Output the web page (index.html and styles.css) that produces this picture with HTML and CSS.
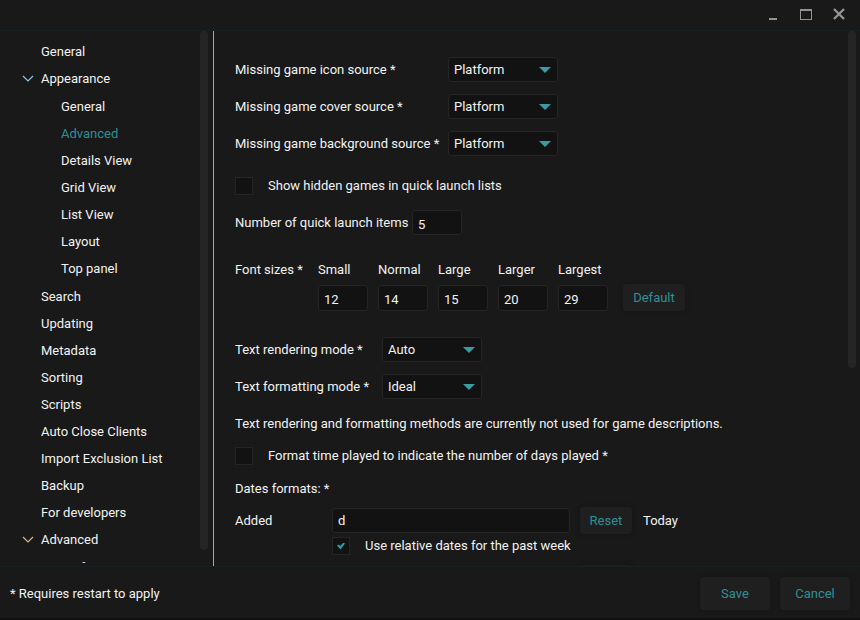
FILE: index.html
```html
<!DOCTYPE html>
<html lang="en">
<head>
<meta charset="utf-8">
<title>Settings</title>
<link rel="stylesheet" href="styles.css">
</head>
<body>
<div class="window">
  <header class="titlebar">
    <button class="caption-button" type="button" aria-label="Minimize"><svg width="14" height="14" viewBox="0 0 14 14"><path d="M3 11h8v2H3z" fill="currentColor"/></svg></button>
    <button class="caption-button" type="button" aria-label="Maximize"><svg width="14" height="14" viewBox="0 0 14 14"><path d="M1 2h12v11H1zM2 4v8h10V4z" fill="currentColor" fill-rule="evenodd"/></svg></button>
    <button class="caption-button" type="button" aria-label="Close"><svg width="14" height="14" viewBox="0 0 14 14"><path d="M2 2l10 10M12 2L2 12" stroke="currentColor" stroke-width="2.4" fill="none"/></svg></button>
  </header>

  <div class="body">
    <nav class="sidebar" aria-label="Sections">
      <ul class="tree">
        <li><a href="#">General</a></li>
        <li><a class="branch" href="#"><svg class="chevron chevron-blue" width="12" height="8" viewBox="0 0 12 8"><path d="M1 1l5 5 5-5"/></svg>Appearance</a>
          <ul class="subtree">
            <li><a href="#">General</a></li>
            <li><a class="active" href="#">Advanced</a></li>
            <li><a href="#">Details View</a></li>
            <li><a href="#">Grid View</a></li>
            <li><a href="#">List View</a></li>
            <li><a href="#">Layout</a></li>
            <li><a href="#">Top panel</a></li>
          </ul>
        </li>
        <li><a href="#">Search</a></li>
        <li><a href="#">Updating</a></li>
        <li><a href="#">Metadata</a></li>
        <li><a href="#">Sorting</a></li>
        <li><a href="#">Scripts</a></li>
        <li><a href="#">Auto Close Clients</a></li>
        <li><a href="#">Import Exclusion List</a></li>
        <li><a href="#">Backup</a></li>
        <li><a href="#">For developers</a></li>
        <li><a class="branch" href="#"><svg class="chevron chevron-gold" width="12" height="8" viewBox="0 0 12 8"><path d="M1 1l5 5 5-5"/></svg>Advanced</a>
          <ul class="subtree">
            <li><a href="#">Performance</a></li>
          </ul>
        </li>
      </ul>
      <div class="scroll"><div class="thumb thumb-nav"></div></div>
    </nav>

    <main class="content">
      <form class="settings">
        <div class="sources">
          <label for="icon-source">Missing game icon source *</label>
          <span class="drop"><select id="icon-source"><option>Platform</option></select></span>
          <label for="cover-source">Missing game cover source *</label>
          <span class="drop"><select id="cover-source"><option>Platform</option></select></span>
          <label for="background-source">Missing game background source *</label>
          <span class="drop"><select id="background-source"><option>Platform</option></select></span>
        </div>

        <label class="check hidden-games"><input type="checkbox">Show hidden games in quick launch lists</label>

        <div class="quick">
          <label for="quick-items">Number of quick launch items</label>
          <input class="field number" id="quick-items" type="text" value="5">
        </div>

        <div class="fonts">
          <span class="fonts-title">Font sizes *</span>
          <label class="size">Small<input class="field number" type="text" value="12"></label>
          <label class="size">Normal<input class="field number" type="text" value="14"></label>
          <label class="size">Large<input class="field number" type="text" value="15"></label>
          <label class="size">Larger<input class="field number" type="text" value="20"></label>
          <label class="size">Largest<input class="field number" type="text" value="29"></label>
          <button class="button small default" type="button">Default</button>
        </div>

        <div class="modes">
          <label for="rendering">Text rendering mode *</label>
          <span class="drop"><select id="rendering"><option>Auto</option></select></span>
          <label for="formatting">Text formatting mode *</label>
          <span class="drop"><select id="formatting"><option>Ideal</option></select></span>
        </div>

        <p class="note">Text rendering and formatting methods are currently not used for game descriptions.</p>

        <label class="check days"><input type="checkbox">Format time played to indicate the number of days played *</label>

        <p class="dates-title">Dates formats: *</p>

        <div class="date">
          <label for="added">Added</label>
          <input class="field" id="added" type="text" value="d">
          <button class="button small" type="button">Reset</button>
          <span>Today</span>
          <label class="check relative"><input type="checkbox" checked>Use relative dates for the past week</label>
        </div>
        <div class="date">
          <label for="modified">Modified</label>
          <input class="field" id="modified" type="text" value="d">
          <button class="button small" type="button">Reset</button>
          <span>Today</span>
        </div>
      </form>
      <div class="scroll"><div class="thumb thumb-content"></div></div>
    </main>
  </div>

  <footer class="footer">
    <span class="restart">* Requires restart to apply</span>
    <button class="button large" type="button">Save</button>
    <button class="button large" type="button">Cancel</button>
  </footer>
</div>
</body>
</html>
```
FILE: styles.css
```css
* {
  box-sizing: border-box;
}

body {
  margin: 0;
  background: #191919;
  color: #f2f2f2;
  font: 13px/20px Roboto, "Noto Sans", sans-serif;
}

button,
input,
select {
  font: inherit;
  color: inherit;
}

p {
  margin: 0;
}

.window {
  display: flex;
  flex-direction: column;
  height: 100vh;
  border-bottom: 2px solid #101010;
}

.titlebar {
  display: flex;
  flex: none;
  justify-content: flex-end;
  height: 31px;
  padding: 0 5px 2px 0;
  border-bottom: 1px solid #172022;
}

.caption-button {
  display: flex;
  align-items: center;
  justify-content: center;
  width: 33px;
  padding: 0;
  border: 0;
  background: none;
  color: #929292;
}

.body {
  display: flex;
  flex: 1;
  min-height: 0;
}

.sidebar {
  display: flex;
  flex: none;
  width: 214px;
  padding-right: 5px;
  border-right: 1px solid #5fc4cb;
}

.tree {
  flex: 1;
  margin: 0 0 3px;
  padding: 7px 0 0;
  list-style: none;
  overflow: hidden;
}

.tree a {
  display: flex;
  align-items: center;
  height: 27px;
  padding-left: 41px;
  color: inherit;
  text-decoration: none;
}

.tree .branch {
  gap: 7px;
  padding-left: 22px;
}

.subtree {
  margin: 0;
  padding: 1px 0;
  list-style: none;
}

.tree .subtree a {
  padding-left: 61px;
}

.tree .active {
  color: #2f8f98;
}

.chevron {
  fill: none;
  stroke-width: 1.2;
}

.chevron-blue {
  stroke: #8ccbe0;
}

.chevron-gold {
  stroke: #d9b880;
}

.scroll {
  flex: none;
  width: 8px;
}

.thumb {
  border-radius: 4px;
  background: #252525;
}

.thumb-nav {
  height: 97%;
}

.thumb-content {
  height: 63%;
}

.content {
  display: flex;
  flex: 1;
  padding-right: 4px;
  overflow: hidden;
}

.settings {
  flex: 1;
  padding: 26px 21px 0;
}

.sources,
.modes {
  display: grid;
  grid-template-columns: 213px 110px;
  row-gap: 12px;
  align-items: center;
}

.modes {
  grid-template-columns: 147px 100px;
  margin-top: 26px;
}

.drop {
  position: relative;
  display: block;
}

.drop::after {
  content: "";
  position: absolute;
  top: 10px;
  right: 7px;
  border: 6px solid transparent;
  border-top-color: #3a9ba4;
  border-bottom: 0;
  pointer-events: none;
}

select,
.field {
  display: block;
  width: 100%;
  height: 25px;
  padding: 0 5px;
  border: 1px solid #252525;
  border-radius: 3px;
  background: #121212;
  appearance: none;
}

.field.number {
  width: 50px;
  padding-top: 3px;
}

.check {
  display: flex;
  align-items: center;
  gap: 15px;
}

.check input {
  width: 18px;
  height: 18px;
  margin: 0;
  border: 1px solid #252525;
  background: #121212;
  appearance: none;
}

.check input:checked {
  display: grid;
  place-items: center;
}

.check input:checked::before {
  content: "";
  width: 8px;
  height: 7px;
  background: #2f9aa5;
  clip-path: polygon(0 44%, 20% 28%, 40% 50%, 80% 0, 100% 14%, 44% 100%);
}

.hidden-games {
  margin-top: 20px;
}

.quick {
  display: grid;
  grid-template-columns: 177px 50px;
  align-items: center;
  margin-top: 14px;
  white-space: nowrap;
}

.fonts {
  display: flex;
  gap: 10px;
  margin-top: 25px;
}

.fonts-title {
  width: 73px;
}

.size {
  width: 50px;
}

.size .field {
  height: 26px;
  margin-top: 5px;
}

.button {
  padding: 0;
  border: 0;
  border-radius: 3px;
  background: #1f1f1f;
  box-shadow: 0 0 4px #141414;
  color: #2f8f98;
}

.button.small {
  height: 27px;
}

.default {
  align-self: flex-end;
  width: 62px;
  margin-left: 5px;
}

.note {
  margin-top: 15px;
}

.days {
  margin-top: 12px;
}

.dates-title {
  margin-top: 13px;
}

.date {
  display: grid;
  grid-template-columns: 97px 238px 52px auto;
  align-items: center;
  margin: 8px 0 9px;
}

.date .button {
  margin-left: 10px;
  margin-right: -10px;
}

.date span {
  margin-left: 21px;
}

.relative {
  grid-column: 2 / -1;
  margin-top: 2px;
}

.footer {
  display: flex;
  flex: none;
  align-items: center;
  gap: 10px;
  padding: 2px 10px 0;
  height: 52px;
  border-top: 1px solid #172022;
}

.restart {
  margin-right: auto;
}

.button.large {
  width: 70px;
  height: 33px;
}
```
